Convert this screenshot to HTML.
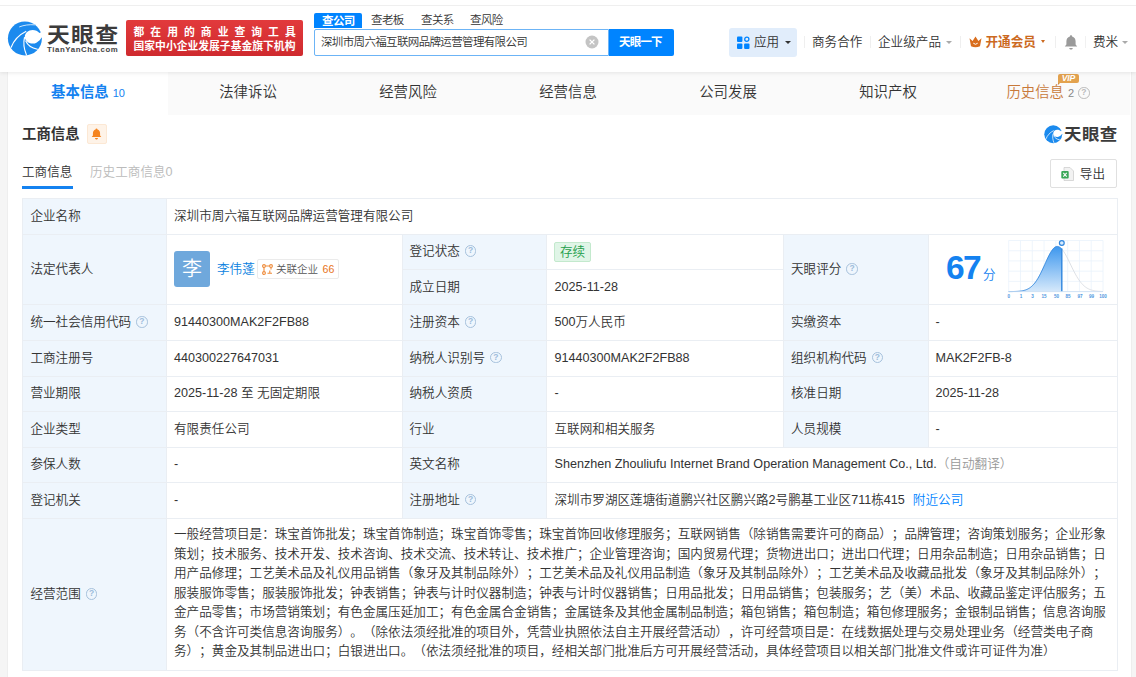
<!DOCTYPE html>
<html lang="zh-CN">
<head>
<meta charset="utf-8">
<title>天眼查</title>
<style>
*{box-sizing:border-box;margin:0;padding:0}
html,body{width:1136px;height:677px;overflow:hidden;background:#f5f5f5}
body{font-family:"Liberation Sans","Noto Sans CJK SC",sans-serif;color:#333;font-size:12.6px;font-weight:350;position:relative;text-spacing-trim:space-all}
.abs{position:absolute;white-space:nowrap}
#header{position:absolute;left:0;top:0;width:1136px;height:72px;background:#fff;box-shadow:0 1px 4px rgba(0,0,0,.09);z-index:5}
#topline{position:absolute;left:0;top:5px;width:1136px;height:1px;background:#efefef}
#main{position:absolute;left:8px;top:72px;width:1123px;height:605px;background:#fff;box-shadow:0 0 0 1px #eee}
#tabs{position:absolute;left:0;top:0;width:1122.4px;height:42.5px;background:#fafafa}
.tab{position:absolute;top:0;height:42.5px;line-height:40px;text-align:center;font-size:14.4px;color:#333;width:160px;white-space:nowrap}
.tab.on{background:#fff;color:#1482f0;font-weight:bold}
.cell{position:absolute;white-space:nowrap;font-size:12.6px;color:#333;line-height:18px}
.lab{position:absolute;background:#eff6fd}
.hl{position:absolute;height:1px;background:#eaeef3}
.vl{position:absolute;width:1px;background:#eaeef3}
.q{display:inline-block;width:11.5px;height:11.5px;border:1px solid #a6c1dc;border-radius:50%;font-size:8.5px;line-height:9.5px;text-align:center;color:#9dbcdb;vertical-align:2px;margin-left:5px;font-weight:bold;font-family:"Liberation Sans",sans-serif}
</style>
</head>
<body>
<div id="header">
  <div id="topline"></div>
  <svg class="abs" style="left:4px;top:16px" width="42" height="44" viewBox="0 0 42 44">
    <circle cx="20.9" cy="22.4" r="17" fill="#1b8aee"/>
    <path d="M35.4 16.9 C33.8 15 31.5 14 28.6 14 C24.3 14 20.8 17 20.8 20.8 C20.8 24.6 24.3 27.6 28.6 27.6 C30.2 27.6 31.5 27.2 32.8 26.4 C35 25 36.6 23.4 37.7 21.5 L40 21.4 L40 15 Z" fill="#fff"/>
    <path d="M7.2 31.2 C9.5 25 14.5 19 21.8 15.4" stroke="#fff" stroke-width="1.15" fill="none" stroke-linecap="round"/>
    <path d="M22.4 38.8 C20 33 19 27.5 20.5 21.5" stroke="#fff" stroke-width="1.15" fill="none" stroke-linecap="round"/>
    <path d="M21.8 25 C23.5 29 27.5 32 33.4 33.2" stroke="#fff" stroke-width="1.15" fill="none" stroke-linecap="round"/>
    <path d="M15.6 10.8 C20 9 25.5 8.4 30.6 8.8" stroke="#c9e5fc" stroke-width="1" fill="none" stroke-linecap="round"/>
  </svg>
  <div class="abs" style="left:46.5px;top:17.5px;font-size:21px;line-height:30px;font-weight:bold;color:#3b3b3b;letter-spacing:1.1px;transform:scaleX(1.09);transform-origin:0 0;font-family:'Noto Sans CJK SC',sans-serif">天眼查</div>
  <div class="abs" style="left:47px;top:45.2px;font-size:7.8px;line-height:10px;font-weight:bold;color:#444;letter-spacing:0.62px;font-family:'Liberation Sans',sans-serif">TianYanCha.com</div>
  <div class="abs" style="left:126.2px;top:20.2px;width:177px;height:35.6px;background:linear-gradient(#e23a3c,#cf2a2e);border-radius:2px"></div>
  <div class="abs" style="left:133.5px;top:24.7px;font-size:10.8px;line-height:15px;font-weight:bold;color:#fff;letter-spacing:6.03px">都在用的商业查询工具</div>
  <div class="abs" style="left:133.5px;top:38.7px;font-size:10.8px;line-height:15px;font-weight:bold;color:#fff;letter-spacing:0px">国家中小企业发展子基金旗下机构</div>

  <div class="abs" style="left:314px;top:13px;width:48px;height:15px;background:#0084ff;border-radius:2px 2px 0 0"></div>
  <div class="abs" style="left:322px;top:12.5px;font-size:11.5px;line-height:16px;font-weight:bold;color:#fff;letter-spacing:-0.6px">查公司</div>
  <div class="abs" style="left:371px;top:12px;font-size:11.5px;line-height:16px;color:#333;letter-spacing:-0.6px">查老板</div>
  <div class="abs" style="left:421px;top:12px;font-size:11.5px;line-height:16px;color:#333;letter-spacing:-0.6px">查关系</div>
  <div class="abs" style="left:470px;top:12px;font-size:11.5px;line-height:16px;color:#333;letter-spacing:-0.6px">查风险</div>
  <div class="abs" style="left:314px;top:28.5px;width:295px;height:27.5px;border:1px solid #6cb4f6;background:#fff;border-radius:2px 0 0 2px"></div>
  <div class="abs" style="left:321px;top:33px;font-size:11.5px;line-height:18px;color:#333;letter-spacing:-0.65px">深圳市周六福互联网品牌运营管理有限公司</div>
  <svg class="abs" style="left:585px;top:35px" width="14" height="14" viewBox="0 0 14 14"><circle cx="7" cy="7" r="6.5" fill="#c4c4c4"/><path d="M4.6 4.6 L9.4 9.4 M9.4 4.6 L4.6 9.4" stroke="#fff" stroke-width="1.3"/></svg>
  <div class="abs" style="left:608.5px;top:28.5px;width:65px;height:27.5px;background:#0084ff;border-radius:0 2px 2px 0"></div>
  <div class="abs" style="left:619px;top:33px;font-size:11.5px;line-height:18px;font-weight:bold;color:#fff;letter-spacing:-0.8px">天眼一下</div>

  <div class="abs" style="left:729px;top:28px;width:68px;height:29px;background:#e1edfb;border-radius:3px"></div>
  <svg class="abs" style="left:737px;top:36px" width="13" height="14" viewBox="0 0 13 14"><rect x="0" y="0.5" width="5.4" height="5.4" rx="1" fill="#0084ff"/><circle cx="9.8" cy="3.2" r="2.1" fill="none" stroke="#0084ff" stroke-width="1.3"/><rect x="0" y="7.6" width="5.4" height="5.4" rx="1" fill="#0084ff"/><rect x="7.1" y="7.6" width="5.4" height="5.4" rx="1" fill="#0084ff"/></svg>
  <div class="abs" style="left:754px;top:33px;font-size:12.6px;line-height:18px;color:#333">应用</div>
  <div class="abs" style="left:784.5px;top:40.5px;border:3px solid transparent;border-top:3.5px solid #333;width:0;height:0"></div>
  <div class="abs" style="left:804px;top:36px;width:1px;height:12px;background:#efefef"></div>
  <div class="abs" style="left:812px;top:33px;font-size:12.6px;line-height:18px;color:#333">商务合作</div>
  <div class="abs" style="left:870px;top:36px;width:1px;height:12px;background:#efefef"></div>
  <div class="abs" style="left:878px;top:33px;font-size:12.6px;line-height:18px;color:#333">企业级产品</div>
  <div class="abs" style="left:946px;top:40.5px;border:3px solid transparent;border-top:3.2px solid #aaa;width:0;height:0"></div>
  <div class="abs" style="left:960px;top:36px;width:1px;height:12px;background:#efefef"></div>
  <svg class="abs" style="left:968.8px;top:36.4px" width="13" height="12" viewBox="0 0 13 12"><path d="M0.5 2.2 L3.6 5 L6.5 0.6 L9.4 5 L12.5 2.2 L11 10.2 Q6.5 12.2 2 10.2 Z" fill="#d96e1e"/><path d="M4.3 7.2 Q6.5 9.4 8.7 7.2" stroke="#fff" stroke-width="1" fill="none"/></svg>
  <div class="abs" style="left:985.5px;top:33px;font-size:12.6px;line-height:18px;color:#cc6a1f;font-weight:bold">开通会员</div>
  <div class="abs" style="left:1040.5px;top:40px;border:2.7px solid transparent;border-top:3.2px solid #cc6a1f;width:0;height:0"></div>
  <div class="abs" style="left:1055px;top:36px;width:1px;height:12px;background:#efefef"></div><div class="abs" style="left:1085px;top:36px;width:1px;height:12px;background:#f1f1f1"></div>
  <svg class="abs" style="left:1063px;top:34px" width="16" height="17" viewBox="0 0 16 17"><path d="M8 1.2 C8.7 1.2 9.1 1.7 9.1 2.4 C11.4 3 12.6 4.9 12.6 7.4 L12.6 10.4 L14.2 12.6 L1.8 12.6 L3.4 10.4 L3.4 7.4 C3.4 4.9 4.6 3 6.9 2.4 C6.9 1.7 7.3 1.2 8 1.2 Z" fill="#9a9a9a"/><path d="M6.2 14 L9.8 14 C9.6 15 9 15.6 8 15.6 C7 15.6 6.4 15 6.2 14Z" fill="#9a9a9a"/></svg>
  <div class="abs" style="left:1093px;top:33px;font-size:12.6px;line-height:18px;color:#333">费米</div>
  <div class="abs" style="left:1121.5px;top:40.5px;border:3px solid transparent;border-top:3.2px solid #aaa;width:0;height:0"></div>
</div>
<div id="main">
<div id="tabs"></div>
<div class="tab on" style="left:0px;width:160px">基本信息 <span style="font-size:11px;font-weight:normal;letter-spacing:0">10</span></div>
<div class="tab" style="left:160px;width:160px">法律诉讼</div>
<div class="tab" style="left:320px;width:160px">经营风险</div>
<div class="tab" style="left:480px;width:160px">经营信息</div>
<div class="tab" style="left:640px;width:160px">公司发展</div>
<div class="tab" style="left:800px;width:160px">知识产权</div>
<div class="tab" style="left:960px;width:160px;color:#c8793a">历史信息 <span style="font-size:11px;color:#888">2</span> <span class="q" style="border-color:#bbb;color:#bbb;margin-left:0">?</span></div>
<div class="abs" style="left:1049.5px;top:2.2px;width:21.7px;height:8.8px;background:#e3a24e;border-radius:2px 2px 2px 0;color:#fff;font-size:8.6px;line-height:9px;font-weight:bold;font-style:italic;text-align:center;letter-spacing:-0.2px;font-family:'Liberation Sans',sans-serif">VIP</div><div class="abs" style="left:1049.5px;top:11px;width:0;height:0;border-top:2.6px solid #cf8f3c;border-right:2.6px solid transparent"></div>
<div class="abs" style="left:14px;top:52px;font-size:14.4px;line-height:20px;font-weight:bold;color:#333">工商信息</div>
<div class="abs" style="left:79px;top:52px;width:19.5px;height:20px;background:#fef3e8;border:1px solid #fce8d4;border-radius:2px"></div>
<svg class="abs" style="left:83px;top:56px" width="11" height="12" viewBox="0 0 16 17"><path d="M8 0.6 C8.9 0.6 9.4 1.2 9.4 2 C12 2.8 13.2 4.9 13.2 7.6 L13.2 10.6 L15 13 L1 13 L2.8 10.6 L2.8 7.6 C2.8 4.9 4 2.8 6.6 2 C6.6 1.2 7.1 0.6 8 0.6 Z" fill="#f5841f"/><path d="M5.8 14.2 L10.2 14.2 C10 15.6 9.2 16.4 8 16.4 C6.8 16.4 6 15.6 5.8 14.2Z" fill="#f5841f"/></svg>
<svg class="abs" style="left:1036.3px;top:53.4px" width="18.5" height="18.5" viewBox="3.4 4.9 35 35">
    <circle cx="20.9" cy="22.4" r="17" fill="#1b8aee"/>
    <path d="M35.4 16.9 C33.8 15 31.5 14 28.6 14 C24.3 14 20.8 17 20.8 20.8 C20.8 24.6 24.3 27.6 28.6 27.6 C30.2 27.6 31.5 27.2 32.8 26.4 C35 25 36.6 23.4 37.7 21.5 L40 21.4 L40 15 Z" fill="#fff"/>
    <path d="M7.2 31.2 C9.5 25 14.5 19 21.8 15.4" stroke="#fff" stroke-width="1.4" fill="none"/>
    <path d="M22.4 38.8 C20 33 19 27.5 20.5 21.5" stroke="#fff" stroke-width="1.4" fill="none"/>
    <path d="M21.8 25 C23.5 29 27.5 32 33.4 33.2" stroke="#fff" stroke-width="1.4" fill="none"/>
  </svg>
<div class="abs" style="left:1056.4px;top:48.6px;font-size:16px;line-height:24px;font-weight:bold;color:#3b3b3b;letter-spacing:0.4px;transform:scaleX(1.09);transform-origin:0 0;font-family:'Noto Sans CJK SC',sans-serif">天眼查</div>
<div class="abs" style="left:14px;top:91px;font-size:12.6px;line-height:18px;color:#333">工商信息</div>
<div class="abs" style="left:14px;top:114px;width:51px;height:2.5px;background:#1482f0"></div>
<div class="abs" style="left:82px;top:91px;font-size:12.6px;line-height:18px;color:#bbb">历史工商信息0</div>
<div class="abs" style="left:1042px;top:87px;width:67px;height:29px;border:1px solid #e0e0e0;border-radius:2px;background:#fff"></div>
<svg class="abs" style="left:1053px;top:95px" width="13" height="14" viewBox="0 0 13 14"><path d="M3 0.5 L9 0.5 L12.5 4 L12.5 13.5 L3 13.5 Z" fill="#f2f2f2" stroke="#cfcfcf" stroke-width=".8"/><rect x="0.3" y="4" width="7.4" height="7.4" rx="1" fill="#3aa757"/><path d="M2.3 5.8 L5.7 9.6 M5.7 5.8 L2.3 9.6" stroke="#fff" stroke-width="1.1"/></svg>
<div class="abs" style="left:1071.8px;top:93px;font-size:12.6px;line-height:18px;color:#333">导出</div>
<div class="lab" style="left:14px;top:126px;width:144.5px;height:472px;background:#eff6fd"></div>
<div class="lab" style="left:393.5px;top:161.5px;width:144.5px;height:284.0px;background:#eff6fd"></div>
<div class="lab" style="left:775px;top:161.5px;width:144.5px;height:213.0px;background:#eff6fd"></div>
<div class="hl" style="left:14px;top:126px;width:1094.5px"></div>
<div class="hl" style="left:14px;top:161.5px;width:1094.5px"></div>
<div class="hl" style="left:393.5px;top:197px;width:381.5px"></div>
<div class="hl" style="left:14px;top:232px;width:1094.5px"></div>
<div class="hl" style="left:14px;top:268px;width:1094.5px"></div>
<div class="hl" style="left:14px;top:303.5px;width:1094.5px"></div>
<div class="hl" style="left:14px;top:339px;width:1094.5px"></div>
<div class="hl" style="left:14px;top:374.5px;width:1094.5px"></div>
<div class="hl" style="left:14px;top:410px;width:1094.5px"></div>
<div class="hl" style="left:14px;top:445.5px;width:1094.5px"></div>
<div class="hl" style="left:14px;top:598px;width:1094.5px"></div>
<div class="vl" style="left:14px;top:126px;height:472px"></div>
<div class="vl" style="left:1108.5px;top:126px;height:473px"></div>
<div class="vl" style="left:158px;top:126px;height:472px"></div>
<div class="vl" style="left:393.5px;top:161.5px;height:284.0px"></div>
<div class="vl" style="left:538px;top:161.5px;height:284.0px"></div>
<div class="vl" style="left:775px;top:161.5px;height:213.0px"></div>
<div class="vl" style="left:919.5px;top:161.5px;height:213.0px"></div>
<div class="cell" style="left:22.4px;top:134.75px;">企业名称</div>
<div class="cell" style="left:166px;top:134.75px;">深圳市周六福互联网品牌运营管理有限公司</div>
<div class="cell" style="left:22.4px;top:188.0px;">法定代表人</div>
<div class="cell" style="left:401.5px;top:170.25px;">登记状态<span class="q">?</span></div>
<div class="cell" style="left:401.5px;top:205.75px;">成立日期</div>
<div class="cell" style="left:546.5px;top:205.75px;">2025-11-28</div>
<div class="cell" style="left:783px;top:188.0px;">天眼评分<span class="q">?</span></div>
<div class="cell" style="left:22.4px;top:241.25px;">统一社会信用代码<span class="q">?</span></div>
<div class="cell" style="left:166px;top:241.25px;">91440300MAK2F2FB88</div>
<div class="cell" style="left:401.5px;top:241.25px;">注册资本<span class="q">?</span></div>
<div class="cell" style="left:546.5px;top:241.25px;">500万人民币</div>
<div class="cell" style="left:783px;top:241.25px;">实缴资本</div>
<div class="cell" style="left:927.5px;top:241.25px;">-</div>
<div class="cell" style="left:22.4px;top:276.75px;">工商注册号</div>
<div class="cell" style="left:166px;top:276.75px;">440300227647031</div>
<div class="cell" style="left:401.5px;top:276.75px;">纳税人识别号<span class="q">?</span></div>
<div class="cell" style="left:546.5px;top:276.75px;">91440300MAK2F2FB88</div>
<div class="cell" style="left:783px;top:276.75px;">组织机构代码<span class="q">?</span></div>
<div class="cell" style="left:927.5px;top:276.75px;">MAK2F2FB-8</div>
<div class="cell" style="left:22.4px;top:312.25px;">营业期限</div>
<div class="cell" style="left:166px;top:312.25px;">2025-11-28 至 无固定期限</div>
<div class="cell" style="left:401.5px;top:312.25px;">纳税人资质</div>
<div class="cell" style="left:546.5px;top:312.25px;">-</div>
<div class="cell" style="left:783px;top:312.25px;">核准日期</div>
<div class="cell" style="left:927.5px;top:312.25px;">2025-11-28</div>
<div class="cell" style="left:22.4px;top:347.75px;">企业类型</div>
<div class="cell" style="left:166px;top:347.75px;">有限责任公司</div>
<div class="cell" style="left:401.5px;top:347.75px;">行业</div>
<div class="cell" style="left:546.5px;top:347.75px;">互联网和相关服务</div>
<div class="cell" style="left:783px;top:347.75px;">人员规模</div>
<div class="cell" style="left:927.5px;top:347.75px;">-</div>
<div class="cell" style="left:22.4px;top:383.25px;">参保人数</div>
<div class="cell" style="left:166px;top:383.25px;">-</div>
<div class="cell" style="left:401.5px;top:383.25px;">英文名称</div>
<div class="cell" style="left:546.5px;top:383.25px;">Shenzhen Zhouliufu Internet Brand Operation Management Co., Ltd.<span style="color:#999">（自动翻译）</span></div>
<div class="cell" style="left:22.4px;top:418.75px;">登记机关</div>
<div class="cell" style="left:166px;top:418.75px;">-</div>
<div class="cell" style="left:401.5px;top:418.75px;">注册地址<span class="q">?</span></div>
<div class="cell" style="left:546.5px;top:418.75px;">深圳市罗湖区莲塘街道鹏兴社区鹏兴路2号鹏基工业区711栋415<span style="color:#0084ff;margin-left:8px">附近公司</span></div>
<div class="cell" style="left:22.4px;top:513.0px;">经营范围<span class="q">?</span></div>
<div class="abs" style="left:545.7px;top:169.7px;width:37.6px;height:20px;background:#e0f5e7;border:1px solid #c3e9cd;border-radius:2px;color:#1e9e4a;font-size:12.6px;line-height:18px;text-align:center">存续</div>
<div class="abs" style="left:166px;top:179px;width:36px;height:36px;background:#6fa8dc;border-radius:3px;color:#fff;font-size:20px;line-height:36px;text-align:center">李</div>
<div class="cell" style="left:209px;top:187.5px;color:#0a7fe0">李伟蓬</div>
<div class="abs" style="left:249.2px;top:187px;width:82.2px;height:19.5px;border:1px solid #ebebeb;border-radius:2px;background:#fff"></div>
<svg class="abs" style="left:253.6px;top:191.6px" width="11" height="11" viewBox="0 0 11 11"><g fill="none" stroke="#ee8b3a" stroke-width="1.1"><circle cx="2" cy="2" r="1.4"/><circle cx="9" cy="2" r="1.4"/><circle cx="2" cy="9" r="1.4"/><path d="M3.4 2H7.6M2 3.4V7.6M9 3.4V5.5M5.5 9.3H10M7.8 6.5V9.3"/></g></svg>
<div class="abs" style="left:268px;top:189px;font-size:10.6px;line-height:16px;color:#555;letter-spacing:-0.1px">关联企业<span style="color:#e8731a;letter-spacing:0;margin-left:4.6px">66</span></div>
<div class="abs" style="left:938px;top:174.2px;font-size:33.5px;line-height:44px;font-weight:bold;color:#1482f0;font-family:'Liberation Sans',sans-serif;letter-spacing:-1.6px">67</div>
<div class="abs" style="left:975px;top:194px;font-size:12.6px;line-height:18px;color:#1482f0">分</div>
<svg class="abs" style="left:996px;top:162px" width="108" height="70" viewBox="0 0 108 70">
<defs><linearGradient id="cg" x1="0" y1="0" x2="0" y2="1"><stop offset="0" stop-color="#3d97ee"/><stop offset="1" stop-color="#d6e9fb"/></linearGradient></defs>
<path d="M4.70 6.50V57.60M16.49 6.50V57.60M28.28 6.50V57.60M40.06 6.50V57.60M51.85 6.50V57.60M63.64 6.50V57.60M75.43 6.50V57.60M87.21 6.50V57.60M99.00 6.50V57.60M4.70 6.50H99.00M4.70 16.72H99.00M4.70 26.94H99.00M4.70 37.16H99.00M4.70 47.38H99.00M4.70 57.60H99.00" stroke="#eaf2fb" stroke-width="0.8" fill="none"/>
<path d="M4.70 57.58 L5.70 57.57 L6.70 57.56 L7.70 57.55 L8.70 57.54 L9.70 57.51 L10.70 57.48 L11.70 57.45 L12.70 57.40 L13.70 57.34 L14.70 57.26 L15.70 57.17 L16.70 57.05 L17.70 56.90 L18.70 56.72 L19.70 56.49 L20.70 56.22 L21.70 55.90 L22.70 55.51 L23.70 55.05 L24.70 54.51 L25.70 53.89 L26.70 53.16 L27.70 52.33 L28.70 51.38 L29.70 50.31 L30.70 49.12 L31.70 47.79 L32.70 46.33 L33.70 44.74 L34.70 43.02 L35.70 41.17 L36.70 39.22 L37.70 37.17 L38.70 35.04 L39.70 32.85 L40.70 30.63 L41.70 28.40 L42.70 26.20 L43.70 24.06 L44.70 22.00 L45.70 20.07 L46.70 18.29 L47.70 16.70 L48.70 15.33 L49.70 14.19 L50.70 13.32 L51.70 12.73 L52.70 12.44 L53.70 12.43 L54.70 12.69 L55.70 13.20 L56.70 13.96 L57.70 14.95 L57.80 15.06 L57.80 57.60 L4.70 57.60 Z" fill="url(#cg)"/>
<path d="M4.70 57.58 L5.70 57.57 L6.70 57.56 L7.70 57.55 L8.70 57.54 L9.70 57.51 L10.70 57.48 L11.70 57.45 L12.70 57.40 L13.70 57.34 L14.70 57.26 L15.70 57.17 L16.70 57.05 L17.70 56.90 L18.70 56.72 L19.70 56.49 L20.70 56.22 L21.70 55.90 L22.70 55.51 L23.70 55.05 L24.70 54.51 L25.70 53.89 L26.70 53.16 L27.70 52.33 L28.70 51.38 L29.70 50.31 L30.70 49.12 L31.70 47.79 L32.70 46.33 L33.70 44.74 L34.70 43.02 L35.70 41.17 L36.70 39.22 L37.70 37.17 L38.70 35.04 L39.70 32.85 L40.70 30.63 L41.70 28.40 L42.70 26.20 L43.70 24.06 L44.70 22.00 L45.70 20.07 L46.70 18.29 L47.70 16.70 L48.70 15.33 L49.70 14.19 L50.70 13.32 L51.70 12.73 L52.70 12.44 L53.70 12.43 L54.70 12.69 L55.70 13.20 L56.70 13.96 L57.70 14.95 L57.80 15.06" stroke="#2f86de" stroke-width="0.9" fill="none"/>
<path d="M57.80 15.06 L58.80 16.29 L59.80 17.71 L60.80 19.30 L61.80 21.04 L62.80 22.90 L63.80 24.86 L64.80 26.88 L65.80 28.94 L66.80 31.02 L67.80 33.08 L68.80 35.12 L69.80 37.10 L70.80 39.02 L71.80 40.85 L72.80 42.59 L73.80 44.23 L74.80 45.75 L75.80 47.16 L76.80 48.46 L77.80 49.64 L78.80 50.71 L79.80 51.67 L80.80 52.52 L81.80 53.28 L82.80 53.94 L83.80 54.52 L84.80 55.03 L85.80 55.46 L86.80 55.83 L87.80 56.14 L88.80 56.41 L89.80 56.63 L90.80 56.82 L91.80 56.97 L92.80 57.10 L93.80 57.20 L94.80 57.28 L95.80 57.35 L96.80 57.41 L97.80 57.45 L98.80 57.48 L99.00 57.49" stroke="#d9dde2" stroke-width="0.9" fill="none"/>
<path d="M57.80 14.41V57.60" stroke="#2f86de" stroke-width="1.4"/>
<path d="M4.70 57.60H99.00" stroke="#c9ddf2" stroke-width="0.8"/>
<circle cx="57.80" cy="9.00" r="2.4" fill="#d9ebfc" stroke="#2f86de" stroke-width="1.2"/>
<text x="4.7" y="64.2" font-size="4.6" font-weight="bold" fill="#4f97e0" text-anchor="middle" font-family="Liberation Sans, sans-serif">0</text>
<text x="17.0" y="64.2" font-size="4.6" font-weight="bold" fill="#4f97e0" text-anchor="middle" font-family="Liberation Sans, sans-serif">1</text>
<text x="28.5" y="64.2" font-size="4.6" font-weight="bold" fill="#4f97e0" text-anchor="middle" font-family="Liberation Sans, sans-serif">3</text>
<text x="40.0" y="64.2" font-size="4.6" font-weight="bold" fill="#4f97e0" text-anchor="middle" font-family="Liberation Sans, sans-serif">15</text>
<text x="52.5" y="64.2" font-size="4.6" font-weight="bold" fill="#4f97e0" text-anchor="middle" font-family="Liberation Sans, sans-serif">50</text>
<text x="64.0" y="64.2" font-size="4.6" font-weight="bold" fill="#4f97e0" text-anchor="middle" font-family="Liberation Sans, sans-serif">85</text>
<text x="76.0" y="64.2" font-size="4.6" font-weight="bold" fill="#4f97e0" text-anchor="middle" font-family="Liberation Sans, sans-serif">97</text>
<text x="87.5" y="64.2" font-size="4.6" font-weight="bold" fill="#4f97e0" text-anchor="middle" font-family="Liberation Sans, sans-serif">99</text>
<text x="99.0" y="64.2" font-size="4.6" font-weight="bold" fill="#4f97e0" text-anchor="middle" font-family="Liberation Sans, sans-serif">100</text>
</svg>
<div class="abs" style="left:166px;top:453.3px;font-size:12.6px;line-height:19.5px;color:#333">一般经营项目是：珠宝首饰批发；珠宝首饰制造；珠宝首饰零售；珠宝首饰回收修理服务；互联网销售（除销售需要许可的商品）；品牌管理；咨询策划服务；企业形象<br>策划；技术服务、技术开发、技术咨询、技术交流、技术转让、技术推广；企业管理咨询；国内贸易代理；货物进出口；进出口代理；日用杂品制造；日用杂品销售；日<br>用产品修理；工艺美术品及礼仪用品销售（象牙及其制品除外）；工艺美术品及礼仪用品制造（象牙及其制品除外）；工艺美术品及收藏品批发（象牙及其制品除外）；<br>服装服饰零售；服装服饰批发；钟表销售；钟表与计时仪器制造；钟表与计时仪器销售；日用品批发；日用品销售；包装服务；艺（美）术品、收藏品鉴定评估服务；五<br>金产品零售；市场营销策划；有色金属压延加工；有色金属合金销售；金属链条及其他金属制品制造；箱包销售；箱包制造；箱包修理服务；金银制品销售；信息咨询服<br>务（不含许可类信息咨询服务）。（除依法须经批准的项目外，凭营业执照依法自主开展经营活动），许可经营项目是：在线数据处理与交易处理业务（经营类电子商<br>务）；黄金及其制品进出口；白银进出口。（依法须经批准的项目，经相关部门批准后方可开展经营活动，具体经营项目以相关部门批准文件或许可证件为准）</div>
</div>
</body>
</html>
